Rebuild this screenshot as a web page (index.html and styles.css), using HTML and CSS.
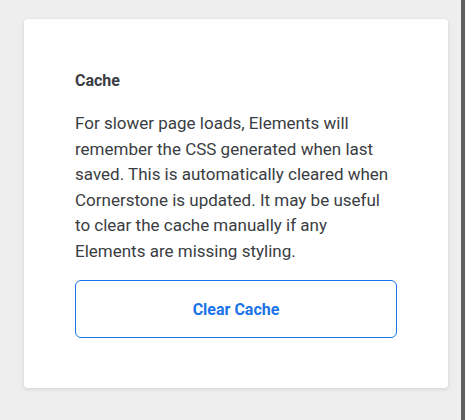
FILE: index.html
```html
<!DOCTYPE html>
<html>
<head>
<meta charset="utf-8">
<link rel="stylesheet" href="styles.css">
</head>
<body>
<div class="page">
  <main class="area">
    <section class="card">
      <h2 class="title">Cache</h2>
      <p class="desc">For slower page loads, Elements will remember the CSS generated when last saved. This is automatically cleared when Cornerstone is updated. It may be useful to clear the cache manually if any Elements are missing styling.</p>
      <button class="btn" type="button">Clear Cache</button>
    </section>
  </main>
  <div class="scrollbar"></div>
</div>
</body>
</html>
```
FILE: styles.css
```css
html, body {
  margin: 0;
  padding: 0;
  height: 100%;
}
body {
  background: #eeeeee;
  font-family: Roboto, "Noto Sans", sans-serif;
}
.page {
  display: flex;
  height: 420px;
}
.area {
  flex: 1;
  padding: 19px 13px 0 24px;
}
.scrollbar {
  width: 4px;
  background: #5f5f5f;
}
.card {
  background: #ffffff;
  border-radius: 4px;
  box-shadow: 0 1px 4px rgba(0, 0, 0, 0.12);
  padding: 51px 51px 50px 51px;
  width: 322px;
}
.title {
  margin: 0 0 19px;
  font-size: 16px;
  font-weight: 700;
  color: #3a3d42;
  line-height: 22px;
}
.desc {
  margin: 0 0 16px;
  font-size: 17px;
  line-height: 25.5px;
  color: #3a3d42;
}
.btn {
  display: block;
  width: 322px;
  height: 58px;
  background: #fff;
  border: 1px solid #1a73e8;
  border-radius: 6px;
  color: #1a73e8;
  font-family: Roboto, "Noto Sans", sans-serif;
  font-weight: 700;
  font-size: 16px;
  cursor: pointer;
}
```
